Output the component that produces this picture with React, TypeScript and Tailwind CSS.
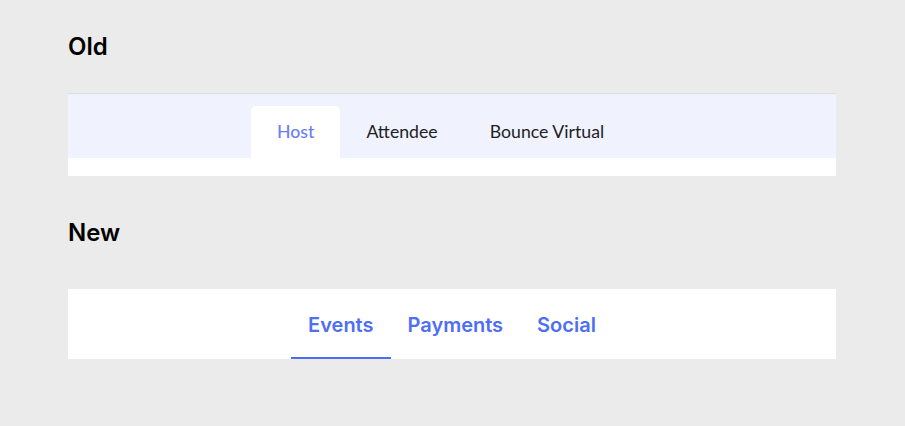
import React, { useState } from 'react';

const oldTabs = ['Host', 'Attendee', 'Bounce Virtual'];
const newTabs = ['Events', 'Payments', 'Social'];

const App: React.FC = () => {
  const [oldActive, setOldActive] = useState(0);
  const [newActive, setNewActive] = useState(0);

  return (
    <div className="min-h-screen bg-[#ebebeb] px-[68px] pt-[31px] font-['Inter',sans-serif]">
      <h2 className="text-2xl leading-8 font-semibold text-black">Old</h2>

      <div className="mt-[30px] w-[768px] bg-white border-t border-[#dddde0]">
        <div className="flex bg-[#f0f3fe] pl-[183px] pt-[12px] font-['Lato',sans-serif] text-[17.7px]">
          {oldTabs.map((tab, i) => (
            <button
              key={tab}
              onClick={() => setOldActive(i)}
              className={
                i === oldActive
                  ? 'h-[52px] px-[26px] rounded-t-[5px] bg-white font-medium text-[#6a7ef6]'
                  : 'h-[52px] px-[26px] text-[#1d1d24]'
              }
            >
              {tab}
            </button>
          ))}
        </div>
        <div className="h-[18px]" />
      </div>

      <h2 className="mt-[41px] text-2xl leading-8 font-semibold text-black">New</h2>

      <div className="mt-[40px] w-[768px] h-[70px] bg-white flex justify-center">
        {newTabs.map((tab, i) => (
          <button
            key={tab}
            onClick={() => setNewActive(i)}
            className={
              i === newActive
                ? 'h-full px-[17px] pt-[4px] border-b-2 border-[#4a6cf7] text-[20px] font-semibold text-[#4f6ef7]'
                : 'h-full px-[17px] pt-[4px] border-b-2 border-transparent text-[20px] font-semibold text-[#4f6ef7]'
            }
          >
            {tab}
          </button>
        ))}
      </div>
    </div>
  );
};

export default App;
